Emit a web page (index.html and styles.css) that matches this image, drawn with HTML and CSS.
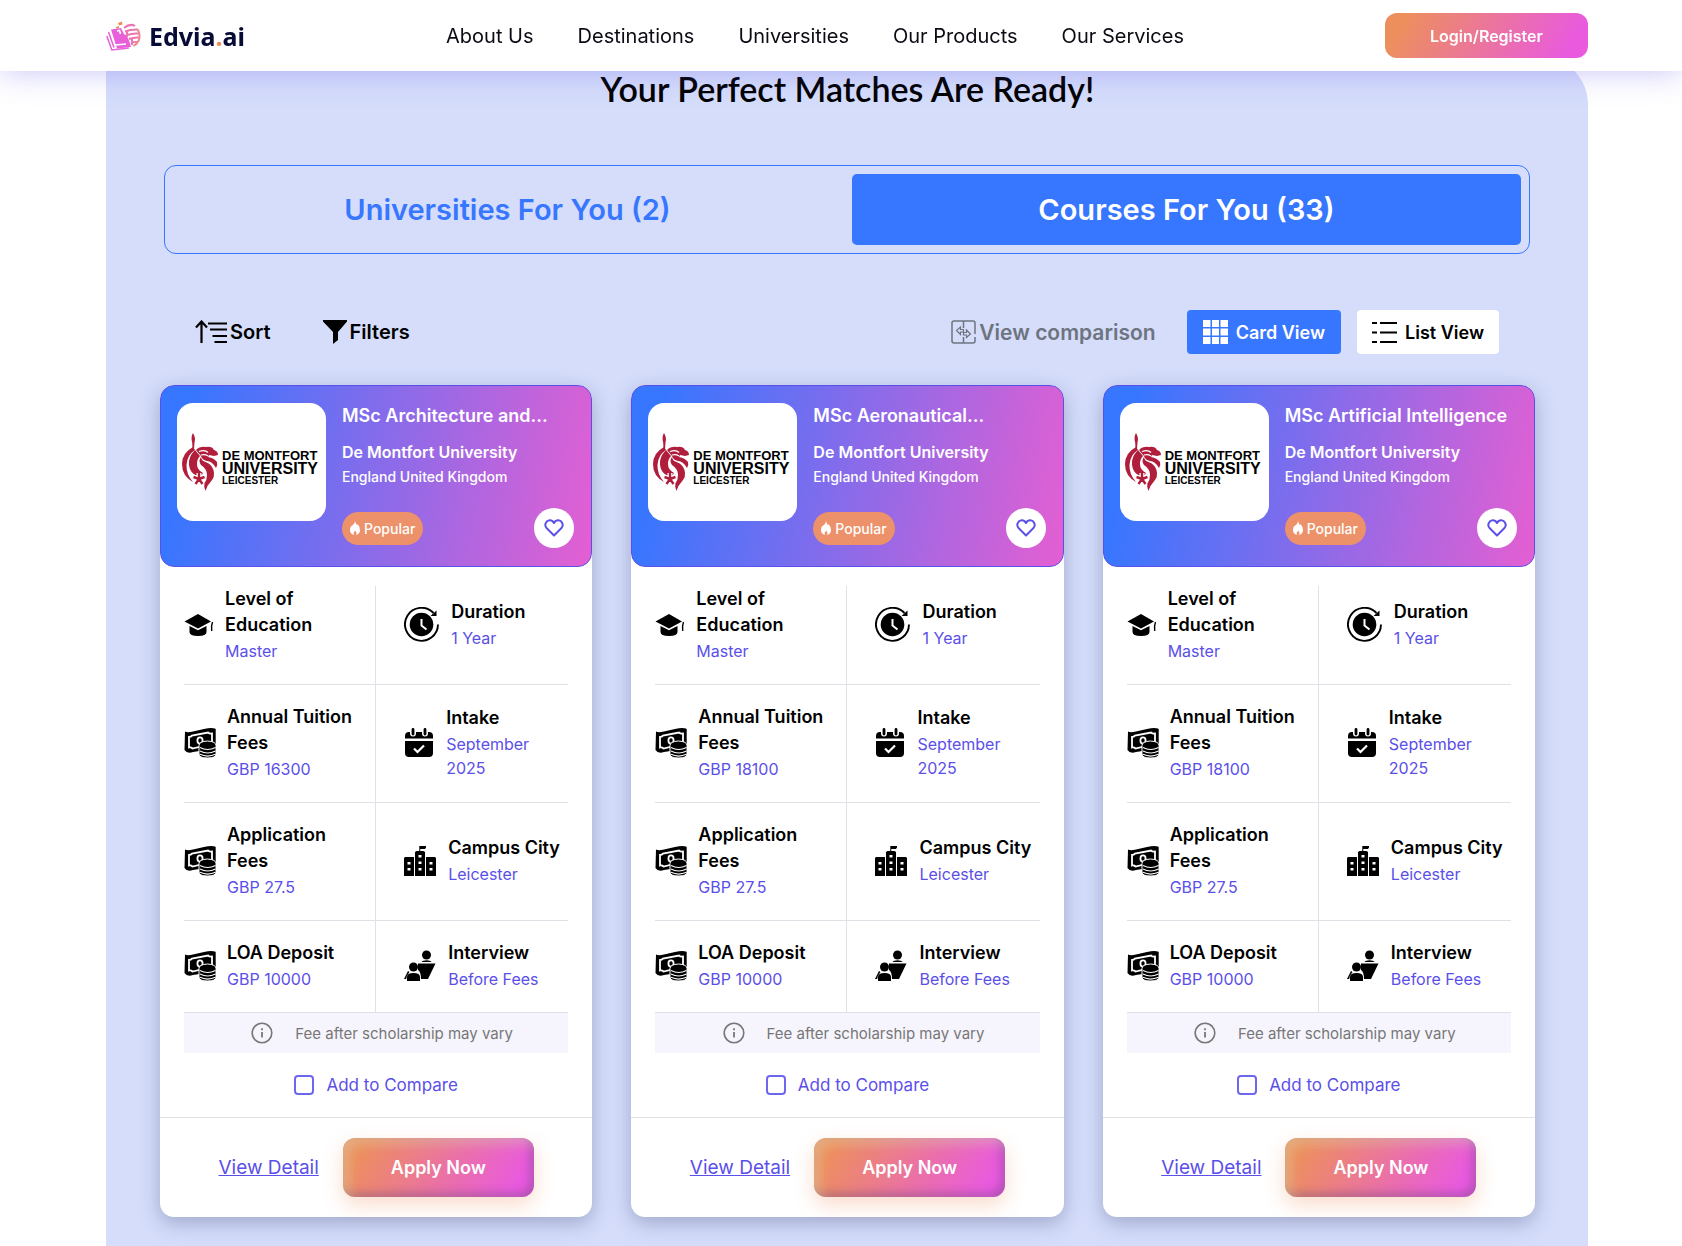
FILE: index.html
```html
<!DOCTYPE html>
<html lang="en">
<head>
    <meta charset="UTF-8">
    <meta name="viewport" content="width=device-width, initial-scale=1">
    <title>Edvia.ai - Course Matches</title>
    <link rel="stylesheet" href="styles.css">
</head>
<body>
    <!-- Icon sprite -->
    <svg class="sprite" aria-hidden="true">
        <symbol id="i-cap" viewBox="0 0 30 24">
            <path d="M14 1 0.500 8.500 14 15.500 27 8.500z"/>
            <path d="M5.500 13v6q0 4 8.500 4t8.500-4v-6L14 17.300z"/>
            <path d="M28.500 9q-1.500 4-.8 9" fill="none" stroke="currentColor" stroke-width="1.400"/>
        </symbol>
        <symbol id="i-money" viewBox="0 0 32 30">
            <path d="M1 3.500Q3.500 5 9 3.500T20 1q7-1.500 11-.5 1 .3.700 2v14q0 4-3 4.500L9 24Q3 26 .5 22z"/>
            <path d="M5 9q2 0 3-1.500L24 4.500Q25.500 6 28 5.500v9.500q-2 0-3 1.500L8.500 20.500Q7 19 5 19.500z" fill="none" stroke="#fff" stroke-width="1.800"/>
            <ellipse cx="16" cy="12.500" rx="2.600" ry="3.200" fill="none" stroke="#fff" stroke-width="1.800"/>
            <path d="M15 17.500q0-4 8.500-4.500 8.500.5 8.500 4.500V26q0 4-8.500 4T15 26z" stroke="#fff" stroke-width="1"/>
            <path d="M16 19.500q7.500 4 15.500 0M16 23q7.500 4 15.500 0M16 26.300q7.500 3.500 15.500 0" fill="none" stroke="#fff" stroke-width="1.200"/>
        </symbol>
        <symbol id="i-clock" viewBox="0 0 35 35">
            <path d="M29.500 6A16.500 16.500 0 1 0 34 17.500" fill="none" stroke="currentColor" stroke-width="1.900"/>
            <path d="M32.500 3.500v5.500h-6z"/>
            <circle cx="17.500" cy="17.500" r="11.800"/>
            <path d="M17.500 12v6.500l5 4" fill="none" stroke="#fff" stroke-width="2"/>
        </symbol>
        <symbol id="i-calendar" viewBox="0 0 30 30">
            <path d="M1 10.500V8q0-4 4-4h20q4 0 4 4v2.500zM1 13h28v12q0 4-4 4H5q-4 0-4-4z"/>
            <path d="M9 1.500v4M21 1.500v4" stroke="#fff" stroke-width="6" stroke-linecap="round"/>
            <path d="M9 1.500v4.500M21 1.500v4.500" stroke="currentColor" stroke-width="2.800" stroke-linecap="round"/>
            <path d="m10 20.500 3.500 3.500 6.500-6.500" fill="none" stroke="#fff" stroke-width="2.200"/>
        </symbol>
        <symbol id="i-campus" viewBox="0 0 32 31">
            <path d="M0 13l1-1h9v19H0zM22 12h9l1 1v18H22zM11 7l1.500-1h2.800V1H22v1.500L21 4h-4.700v2h3.200L21 7v24H11z"/>
            <path d="M10.500 12v19M21.500 12v19" stroke="#fff" stroke-width=".6"/>
            <path d="M5 17v2.500M5 23v2.500M16 10v2.500M16 16.500V19M16 23v2.500M27 17v2.500M27 23v2.500" stroke="#fff" stroke-width="3"/>
        </symbol>
        <symbol id="i-interview" viewBox="0 0 32 32">
            <circle cx="22.500" cy="5" r="4.500"/>
            <path d="M17.500 12q1-1.800 5-1.800t5 1.800zM14 13.500h17.500L24 29h-7q0-7-3-9z"/>
            <circle cx="9.500" cy="17" r="4.500"/>
            <path d="M3 31v-4q0-4 6.500-4t6.500 4v4zM0 29l4-8 1.500 1-2.500 3.500-.8 3.500z"/>
        </symbol>
        <symbol id="i-info" viewBox="0 0 22 22">
            <circle cx="11" cy="11" r="9.800" fill="none" stroke="currentColor" stroke-width="1.600"/>
            <path d="M11 10v5.500M11 6.200v2" fill="none" stroke="currentColor" stroke-width="1.800"/>
        </symbol>
        <symbol id="i-heart" viewBox="0 0 20 18">
            <path d="M10 16.500 2.500 9Q.5 6.500 1.800 4 3 1.500 5.500 1.300 8.500 1.200 10 4q1.500-2.800 4.500-2.700 2.500.2 3.700 2.700 1.300 2.500-.7 5z" fill="none" stroke="currentColor" stroke-width="2" stroke-linejoin="round"/>
        </symbol>
        <symbol id="i-flame" viewBox="0 0 10 14">
            <path d="M5 0q.5 2.500 2 4.300Q7.700 4 7.700 3 10 6 10 9q0 4-4 5 1.200-2.500-.8-4.500Q3 11.500 4 14 0 13 0 9t3-5q2-1.500 2-4z"/>
        </symbol>
        <symbol id="dmu-lion" viewBox="0 0 36 58">
            <!-- tail -->
            <path d="M11 0q3 5 1.500 9.500L12 16h-1.500L10.200 9.500Q8.500 4 11 0z"/>
            <!-- back and body -->
            <path d="M11 14Q0 20 0 31q0 12 11 18-7-8-6.500-17Q5 22 13 17z"/>
            <path d="M13 17Q6 24 7 32q1 8 8 11 5 0 6-3-6-3-6-9 0-5 3-8z"/>
            <path d="M19 24q-3 4 0 8 6 4 6 10 0 5-2.500 8-1 4 1 8 1-5 5-9 5-5 3-12-2-6-8-8-4-1-4.500-5z"/>
            <!-- head and mane -->
            <path d="M14 17q4-4 10-3 6-1 8 3 4 1 4 5l-4 1-5-1-1 2q6 1 9 5 1 3-1 6-4-7-9-7-5-1-6-5z"/>
            <path d="M17 18.500q6-2 9 1M19 22q4-1 7 1" fill="none" stroke="#fff" stroke-width="1.200"/>
            <!-- cinquefoil -->
            <path d="M17 46v-6M17 46l-5.500-2M17 46l5.500-2M17 46l-3.500 5M17 46l3.500 5" fill="none" stroke="#fff" stroke-width="5"/>
            <path d="M17 46v-6M17 46l-5.500-2M17 46l5.500-2M17 46l-3.500 5M17 46l3.500 5" fill="none" stroke="currentColor" stroke-width="2.400"/>
        </symbol>
    </svg>

    <header class="site-header">
        <a class="logo" href="#">
            <svg width="36" height="30" viewBox="0 0 36 30" aria-hidden="true">
                <g fill="#e95fd9">
                    <path d="M5 8.500 15 7l3 6q4 1 7 13l-14 1.500z"/>
                    <path d="M2.500 11 8 26.500M.8 15l5 14 17-2" fill="none" stroke="#e95fd9" stroke-width="1.500"/>
                </g>
                <path d="m11 10 2.500-.5 1 3.500M9 24l11-1" fill="none" stroke="#fff" stroke-width="1.600"/>
                <g fill="none" stroke="#ee8a8c" stroke-width="2">
                    <path d="M18 7q6-5 11-2M19 10.500q5-2 12-2M21 14q5-2 12-1.500M23 18q5-2 10-1.500M25 22q4-1.500 7-1M21 9v7M26 17v7" stroke="#ec74b4"/>
                    <path d="M31 8q3 3 2.500 9-1 5-6 8"/>
                </g>
                <path d="m12 2 4-1.500.5 3-3.500 1zM10 6l3-1v2l-2.500.8z" fill="#ee8c55"/>
            </svg>
            <span class="logo-text">Edvia<span class="dot">.</span>ai</span>
        </a>
        <nav class="main-nav">
            <a href="#">About Us</a>
            <a href="#">Destinations</a>
            <a href="#">Universities</a>
            <a href="#">Our Products</a>
            <a href="#">Our Services</a>
        </nav>
        <button class="login-btn" type="button">Login/Register</button>
    </header>

    <main class="matches">
        <h1>Your Perfect Matches Are Ready!</h1>

        <div class="tabs">
            <button class="tab" type="button">Universities For You (2)</button>
            <button class="tab active" type="button">Courses For You (33)</button>
        </div>

        <div class="toolbar">
            <button class="tool" type="button">
                <svg class="line" width="32" height="24" viewBox="0 0 32 24" stroke-width="2.200" aria-hidden="true">
                    <path d="M6.500 23V2M1 7.500l5.500-6 5.500 6M13 3.500h19M15 9.500h17M17.500 16H32M19.500 22H32"/>
                </svg>
                Sort
            </button>
            <button class="tool" type="button">
                <svg width="24" height="24" viewBox="0 0 24 24" aria-hidden="true">
                    <path d="M0 0h24v1.500L15 12v8l-5 4V12L0 1.500z"/>
                </svg>
                Filters
            </button>
            <button class="tool compare-link" type="button">
                <svg class="line" width="25" height="24" viewBox="0 0 25 24" stroke-width="1.500" aria-hidden="true">
                    <path d="M24 14V3q0-2-2-2H3Q1 1 1 3v18q0 2 2 2h19q2 0 2-2v-4M12.500 1v7M12.500 17v6"/>
                    <path d="M12.500 12H9.500v2.500L5.500 10.500l4-3.500v2.500h3zM12.500 12.500h3V10l4 4-4 3.500V15h-3z" stroke-width="1.200"/>
                </svg>
                View comparison
            </button>
            <button class="view-btn active" type="button">
                <svg width="25" height="24" viewBox="0 0 25 24" aria-hidden="true">
                    <path d="M0 0h7.500v7H0zM9 0h7v7H9zM17.500 0H25v7h-7.500zM0 8.500h7.500v7H0zM9 8.500h7v7H9zM17.500 8.500H25v7h-7.500zM0 17h7.500v7H0zM9 17h7v7H9zM17.500 17H25v7h-7.500z"/>
                </svg>
                Card View
            </button>
            <button class="view-btn" type="button">
                <svg class="line" width="25" height="24" viewBox="0 0 25 24" stroke-width="2" aria-hidden="true">
                    <path d="M0 3h5M8 3h17M0 12.500h5M8 12.500h17M0 22h5M8 22h17"/>
                </svg>
                List View
            </button>
        </div>

        <div class="cards" id="cards"></div>
    </main>

    <script>
        const cards = document.getElementById('cards');

        const courses = [
            { title: 'MSc Architecture and...', tuition: 'GBP 16300' },
            { title: 'MSc Aeronautical...', tuition: 'GBP 18100' },
            { title: 'MSc Artificial Intelligence', tuition: 'GBP 18100' }
        ];

        function icon(name, width, height) {
            return `<svg width="${width}" height="${height}" aria-hidden="true"><use href="#${name}"/></svg>`;
        }

        function fact(svg, label, value) {
            return `
                <div class="fact">
                    ${svg}
                    <dl>
                        <dt>${label}</dt>
                        <dd>${value}</dd>
                    </dl>
                </div>`;
        }

        // Build one card per course
        cards.innerHTML = courses.map((course, i) => `
            <article class="card">
                <div class="card-head">
                    <div class="uni-logo">
                        ${icon('dmu-lion', 36, 58)}
                        <div class="uni-name">
                            <span>DE MONTFORT</span>
                            <span class="big">UNIVERSITY</span>
                            <span class="small">LEICESTER</span>
                        </div>
                    </div>
                    <div class="card-info">
                        <h2>${course.title}</h2>
                        <p class="university">De Montfort University</p>
                        <p class="location">England United Kingdom</p>
                        <div class="badges">
                            <span class="popular">${icon('i-flame', 10, 14)}Popular</span>
                            <button class="like" type="button" aria-label="Save course">${icon('i-heart', 20, 18)}</button>
                        </div>
                    </div>
                </div>
                <div class="facts">
                    ${fact(icon('i-cap', 30, 24), 'Level of<br>Education', 'Master')}
                    ${fact(icon('i-clock', 35, 35), 'Duration', '1 Year')}
                    ${fact(icon('i-money', 32, 30), 'Annual Tuition<br>Fees', course.tuition)}
                    ${fact(icon('i-calendar', 30, 30), 'Intake', 'September<br>2025')}
                    ${fact(icon('i-money', 32, 30), 'Application<br>Fees', 'GBP 27.5')}
                    ${fact(icon('i-campus', 32, 31), 'Campus City', 'Leicester')}
                    ${fact(icon('i-money', 32, 30), 'LOA Deposit', 'GBP 10000')}
                    ${fact(icon('i-interview', 32, 32), 'Interview', 'Before Fees')}
                </div>
                <p class="note">${icon('i-info', 22, 22)}Fee after scholarship may vary</p>
                <div class="compare">
                    <input type="checkbox" id="compare${i}">
                    <label for="compare${i}">Add to Compare</label>
                </div>
                <div class="card-foot">
                    <a href="#">View Detail</a>
                    <button class="apply-btn" type="button">Apply Now</button>
                </div>
            </article>`).join('');
    </script>
</body>
</html>
```
FILE: styles.css
```css
* { box-sizing: border-box; }
body { margin: 0; padding-top: 55px; font-family: "Inter", "Open Sans", sans-serif; background: #fff; color: #000; }
h1, h2, p, dl, dd { margin: 0; }
button { border: none; background: none; padding: 0; font-family: inherit; color: inherit; cursor: pointer; }
svg { flex: none; fill: currentColor; }
svg.line { fill: none; stroke: currentColor; }
.sprite { display: none; }

/* Header */
.site-header { position: fixed; top: 0; left: 0; right: 0; z-index: 10; height: 71px; padding: 0 94px 0 106px; display: flex; align-items: center; justify-content: space-between; background: #fff; box-shadow: 0 0 32px rgba(91, 79, 233, 0.35); }
.logo { display: flex; align-items: center; gap: 7px; color: #070b35; text-decoration: none; }
.logo-text { font-family: "Noto Sans", sans-serif; font-size: 25px; font-weight: 700; line-height: 30px; }
.logo .dot { color: #ee8c55; }
.main-nav { display: flex; gap: 44px; }
.main-nav a { color: #0b0b14; font-size: 20px; text-decoration: none; white-space: nowrap; }
.login-btn { width: 203px; height: 45px; border-radius: 12px; background: linear-gradient(120deg, #ed8f5d 10%, #e95adf 90%); color: #fff; font-size: 16px; font-weight: 600; }

/* Results panel */
.matches { margin: 0 94px 0 106px; padding: 14px 53px 60px 54px; background: #d5ddfb; border-top-right-radius: 50px; }
h1 { font-family: "Lato", sans-serif; font-size: 34px; font-weight: 600; line-height: 40px; text-align: center; }

.tabs { display: flex; gap: 10px; margin: 56px 5px 0 4px; padding: 8px; border: 1px solid #3776ff; border-radius: 12px; }
.tab { flex: 1; height: 71px; border-radius: 5px; color: #3776ff; font-size: 29px; font-weight: 600; }
.tab.active { background: #3776ff; color: #fff; }

.toolbar { display: flex; align-items: center; margin: 56px 36px 0 35px; }
.tool { display: flex; align-items: center; gap: 3px; margin-right: 52px; font-size: 20px; font-weight: 600; }
.compare-link { margin-left: auto; margin-right: 31px; color: #6d7480; font-size: 21px; }
.view-btn { display: flex; align-items: center; gap: 8px; height: 44px; padding: 0 15px; border-radius: 4px; background: #fff; font-size: 18px; font-weight: 600; }
.view-btn.active { margin-right: 16px; padding: 0 16px; background: #3776ff; color: #fff; }

/* Cards */
.cards { display: grid; grid-template-columns: repeat(3, 1fr); gap: 39px; margin-top: 31px; }
.card { background: #fff; border-radius: 14px; box-shadow: 0 6px 20px rgba(60, 70, 120, 0.35); }
.card-head { display: flex; gap: 16px; height: 182px; padding: 17px 17px 17px 16px; border: 1px solid #5b4fe9; border-radius: 14px; background: linear-gradient(101deg, #3776ff 7%, #e45fd2 100%); color: #fff; }
.uni-logo { flex: none; display: flex; align-items: center; gap: 4px; width: 149px; height: 118px; padding-left: 5px; border-radius: 16px; background: #fff; color: #b01e3c; }
.uni-name { display: flex; flex-direction: column; padding-top: 12px; color: #000; font-family: "Liberation Sans", sans-serif; font-weight: 700; font-size: 13px; line-height: 12px; white-space: nowrap; }
.uni-name .big { font-size: 16px; line-height: 13px; }
.uni-name .small { font-size: 10px; line-height: 12px; }
.card-info { flex: 1; min-width: 0; }
.card-info h2 { font-size: 18px; font-weight: 600; line-height: 26px; white-space: nowrap; }
.university { margin-top: 10px; font-size: 16px; font-weight: 600; line-height: 26px; }
.location { font-size: 14px; font-weight: 500; line-height: 24px; }
.badges { display: flex; align-items: center; justify-content: space-between; margin-top: 19px; }
.popular { display: flex; align-items: center; gap: 4px; height: 33px; padding: 0 8px; border-radius: 17px; background: #ec9169; font-size: 14px; font-weight: 500; }
.like { display: grid; place-items: center; width: 40px; height: 40px; border-radius: 50%; background: #fff; color: #5b4fe9; }

.facts { display: grid; grid-template-columns: 1fr 1fr; margin: 19px 24px 0; }
.fact { display: flex; align-items: center; gap: 11px; padding: 19px 0 21px; border-bottom: 1px solid #dfe1e6; }
.fact:nth-child(-n+2) { padding-top: 0; }
.fact:nth-child(odd) { border-right: 1px solid #dfe1e6; }
.fact:nth-child(even) { gap: 12px; padding-left: 28px; }
.fact dt { font-size: 18px; font-weight: 600; line-height: 26px; white-space: nowrap; }
.fact dd { margin-top: 1px; color: #5b4fe9; font-size: 16px; line-height: 24px; }

.note { display: flex; align-items: center; justify-content: center; gap: 22px; height: 40px; margin: 0 24px; padding-left: 12px; background: #f6f5fd; color: #777; font-size: 15px; }
.compare { display: flex; align-items: center; justify-content: center; gap: 12px; height: 64px; color: #5b4fe9; font-size: 17px; }
.compare input { appearance: none; width: 20px; height: 20px; margin: 0; border: 2px solid #6f66ee; border-radius: 4px; background: #fff; }
.compare input:checked { background: #5b4fe9; }
.card-foot { display: flex; align-items: center; justify-content: center; gap: 24px; padding: 20px; border-top: 1px solid #dfe1e6; }
.card-foot a { color: #5b4fe9; font-size: 19px; }
.apply-btn { width: 191px; height: 59px; border-radius: 12px; background: linear-gradient(120deg, #ed8f5d 10%, #e95adf 90%); box-shadow: 0 8px 20px rgba(238, 140, 85, 0.3), inset 6px 6px 12px rgba(220, 220, 180, 0.4), inset -4px -4px 10px rgba(100, 60, 120, 0.4); color: #fff; font-size: 18px; font-weight: 600; }
```
